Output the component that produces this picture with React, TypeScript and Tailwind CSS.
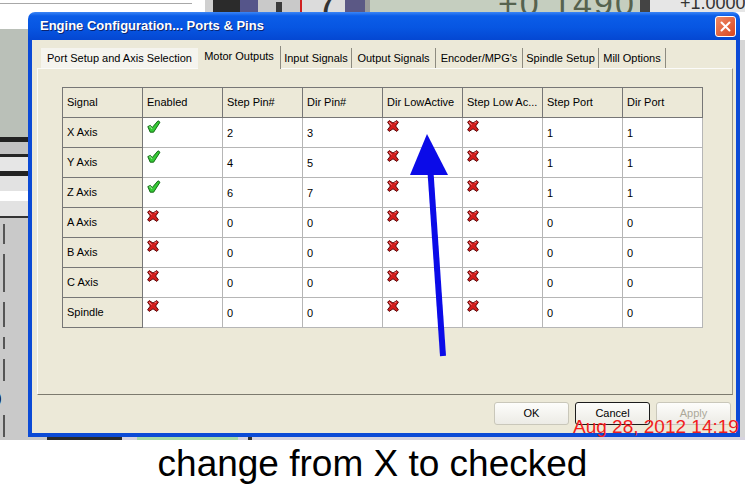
const font = "font-['Liberation_Sans',Arial,sans-serif]";

type Row = {
  signal: string;
  enabled: boolean;
  stepPin: number;
  dirPin: number;
  dirLow: boolean;
  stepLow: boolean;
  stepPort: number;
  dirPort: number;
};

const rows: Row[] = [
  { signal: 'X Axis', enabled: true, stepPin: 2, dirPin: 3, dirLow: false, stepLow: false, stepPort: 1, dirPort: 1 },
  { signal: 'Y Axis', enabled: true, stepPin: 4, dirPin: 5, dirLow: false, stepLow: false, stepPort: 1, dirPort: 1 },
  { signal: 'Z Axis', enabled: true, stepPin: 6, dirPin: 7, dirLow: false, stepLow: false, stepPort: 1, dirPort: 1 },
  { signal: 'A Axis', enabled: false, stepPin: 0, dirPin: 0, dirLow: false, stepLow: false, stepPort: 0, dirPort: 0 },
  { signal: 'B Axis', enabled: false, stepPin: 0, dirPin: 0, dirLow: false, stepLow: false, stepPort: 0, dirPort: 0 },
  { signal: 'C Axis', enabled: false, stepPin: 0, dirPin: 0, dirLow: false, stepLow: false, stepPort: 0, dirPort: 0 },
  { signal: 'Spindle', enabled: false, stepPin: 0, dirPin: 0, dirLow: false, stepLow: false, stepPort: 0, dirPort: 0 },
];

const headers = ['Signal', 'Enabled', 'Step Pin#', 'Dir Pin#', 'Dir LowActive', 'Step Low Ac...', 'Step Port', 'Dir Port'];

const tabs = [
  { label: 'Port Setup and Axis Selection', w: 'w-[157px]' },
  { label: 'Motor Outputs', w: 'w-[83px]' },
  { label: 'Input Signals', w: 'w-[71px]' },
  { label: 'Output Signals', w: 'w-[84px]' },
  { label: "Encoder/MPG's", w: 'w-[87px]' },
  { label: 'Spindle Setup', w: 'w-[76px]' },
  { label: 'Mill Options', w: 'w-[67px]' },
];

// green tick, Mach3 style: fat foot bottom-left, stick to the top-right
function CheckIcon() {
  return (
    <svg width="14" height="13" viewBox="0 0 14 13">
      <path
        d="M0.8 6.6 L3.4 5.4 L5.2 7.6 L11 0.8 L13 2.2 L6.6 12.2 L3.2 12.2 Z"
        fill="#35c935"
        stroke="#156b17"
        strokeWidth="1"
        strokeLinejoin="round"
      />
      <path d="M2.2 7 L3.4 6.6 L5 9" fill="none" stroke="#b0f4b0" strokeWidth="0.9" />
    </svg>
  );
}

function CrossIcon() {
  return (
    <svg width="12" height="12" viewBox="0 0 12 12">
      <path
        d="M0.6 2.2 L2.2 0.6 L6 3 L9.8 0.6 L11.4 2.2 L8.6 6 L11.4 9.8 L9.8 11.4 L6 8.8 L2.2 11.4 L0.6 9.8 L3.4 6 Z"
        fill="#d41d1d"
        stroke="#5c0909"
        strokeWidth="1"
        strokeLinejoin="round"
      />
      <path d="M2 2.3 L4.6 4.6 M7.6 2.6 L9.4 2" stroke="#ff9d9d" strokeWidth="0.9" />
    </svg>
  );
}

function IconCell({ on }: { on: boolean }) {
  return (
    <div className="h-[30px] border-r border-b border-[#b6b6b6] bg-white pl-[4px] pt-[2px]">
      {on ? <CheckIcon /> : <CrossIcon />}
    </div>
  );
}

function TextCell({ v }: { v: number }) {
  return (
    <div className="h-[30px] border-r border-b border-[#b6b6b6] bg-white pl-[4px] pt-[2px] flex items-center text-[11px] text-black">
      {v}
    </div>
  );
}

function Button({ label, strong, disabled }: { label: string; strong?: boolean; disabled?: boolean }) {
  return (
    <div
      className={`w-[75px] h-[23px] rounded-[3px] flex items-center justify-center text-[11px] bg-[linear-gradient(180deg,#fdfdfb,#ecebe5)] ${
        strong ? 'border border-[#1c1c1c]' : 'border border-[#c9c7ba]'
      } ${disabled ? 'text-[#aca899]' : 'text-black'}`}
    >
      {label}
    </div>
  );
}

function TopStrip() {
  return (
    <div className="h-[12px] flex overflow-hidden">
      <div className="w-[205px] bg-white pt-[3px]">
        <div className="w-[192px] h-px bg-[#a8a8a8]" />
      </div>
      <div className="w-[8px] bg-[#d0d0d0]" />
      <div className="w-[27px] bg-[#2b2b2b]" />
      <div className="w-[18px] bg-[#55558a]" />
      <div className="w-[42px] bg-[#c9c9c9] flex justify-center">
        <div className="w-[6px] bg-[#3a3a3a] mt-[2px]" />
      </div>
      <div className="w-[2px] bg-[#d02020]" />
      <div className="w-[43px] bg-[#dcdcdc] relative">
        <span className="absolute left-[18px] -top-[16px] text-[26px] font-bold text-[#333]">7</span>
      </div>
      <div className="w-[20px] bg-[#5b5885]" />
      <div className="w-[5px] bg-[#9a9a9a]" />
      <div className="w-[270px] bg-[#c5cebf] relative">
        <span className="absolute left-[128px] -top-[22px] text-[34px] tracking-[2px] text-[#56634f]">+0 1490</span>
      </div>
      <div className="w-[10px] bg-[#444]" />
      <div className="flex-1 bg-[#e6e6e6] relative">
        <span className="absolute left-[30px] -top-[10px] text-[18px] text-[#333]">+1.0000</span>
      </div>
    </div>
  );
}

function LeftStrip() {
  return (
    <div className="w-[28px] flex flex-col">
      <div className="h-[18px] bg-white" />
      <div className="h-[113px] bg-[#bac0b8]" />
      <div className="h-[5px] bg-[#222]" />
      <div className="h-[13px] bg-[#c2c2c2]" />
      <div className="h-[3px] bg-[#262626]" />
      <div className="h-[15px] bg-[#e6e6e6]" />
      <div className="h-[5px] bg-[#232323]" />
      <div className="h-[42px] bg-[#e2e2e2] flex flex-col justify-center">
        <div className="h-[10px] bg-white" />
      </div>
      <div className="h-[2px] bg-[#333]" />
      <div className="flex-1 bg-[#c9c9c9] pl-[3px] flex flex-col gap-[10px] pt-[6px]">
        <div className="w-[2px] h-[20px] bg-[#555]" />
        <div className="w-[2px] h-[38px] bg-[#555]" />
        <div className="w-[2px] h-[25px] bg-[#555]" />
        <div className="w-[2px] h-[12px] bg-[#555]" />
        <div className="w-[2px] h-[22px] bg-[#555]" />
        <div className="text-[14px] leading-none text-black -ml-[6px]">)</div>
        <div className="w-[2px] h-[22px] bg-[#555]" />
      </div>
    </div>
  );
}

function Dialog() {
  return (
    <div className="w-[712px] flex flex-col">
      <div className="h-[28px] rounded-t-[7px] bg-[linear-gradient(180deg,#3b86f6_0%,#0b5de8_14%,#0756e2_55%,#0447d2_100%)] flex items-center pl-[12px] pr-[4px]">
        <span className="flex-1 text-white font-bold text-[13px] [text-shadow:1px_1px_0_#0a2470]">
          Engine Configuration... Ports &amp; Pins
        </span>
        <div className="w-[21px] h-[21px] rounded-[3px] border border-white bg-[linear-gradient(135deg,#ef8a66,#d8461f)] flex items-center justify-center">
          <svg width="11" height="11" viewBox="0 0 11 11">
            <path d="M1.5 1.5 L9.5 9.5 M9.5 1.5 L1.5 9.5" stroke="white" strokeWidth="2" strokeLinecap="round" />
          </svg>
        </div>
      </div>
      <div className="flex-1 bg-[#ece9d8] border-x-4 border-b-4 border-[#0b4ad6] flex flex-col">
        <div className="flex pl-[9px] pt-[6px] h-[28px] items-end">
          {tabs.map((t, i) =>
            i === 1 ? (
              <div
                key={t.label}
                className={`${t.w} h-[23px] -mb-px z-10 bg-[#ece9d8] border-r border-[#8d8b80] flex items-center justify-center text-[11px] text-black pb-[3px]`}
              >
                {t.label}
              </div>
            ) : (
              <div
                key={t.label}
                className={`${t.w} h-[20px] flex items-center justify-center text-[11px] text-black ${
                  i === 0 ? 'bg-[#f5f4ee]' : 'border-r border-[#8d8b80]'
                }`}
              >
                {t.label}
              </div>
            )
          )}
        </div>
        <div className="ml-[5px] w-[696px] h-[327px] border border-l-[#fbfbf9] border-t-[#fbfbf9] border-r-[#9a988c] border-b-[#7c7a6e] pl-[24px] pt-[18px]">
          <div className="grid grid-cols-[repeat(8,80px)] w-[641px] border-l border-t border-[#767676] text-[11px] text-black">
            {headers.map((h) => (
              <div key={h} className="h-[30px] border-r border-b border-[#767676] bg-[#ece9d8] pl-[4px] flex items-center whitespace-nowrap">
                {h}
              </div>
            ))}
            {rows.map((r) => [
              <div key={r.signal} className="h-[30px] border-r border-b border-[#767676] bg-[#ece9d8] pl-[4px] flex items-center">
                {r.signal}
              </div>,
              <IconCell key={r.signal + 'e'} on={r.enabled} />,
              <TextCell key={r.signal + 's'} v={r.stepPin} />,
              <TextCell key={r.signal + 'd'} v={r.dirPin} />,
              <IconCell key={r.signal + 'dl'} on={r.dirLow} />,
              <IconCell key={r.signal + 'sl'} on={r.stepLow} />,
              <TextCell key={r.signal + 'sp'} v={r.stepPort} />,
              <TextCell key={r.signal + 'dp'} v={r.dirPort} />,
            ])}
          </div>
        </div>
        <div className="flex justify-end gap-[6px] pr-[5px] pt-[7px]">
          <Button label="OK" />
          <Button label="Cancel" strong />
          <Button label="Apply" disabled />
        </div>
      </div>
    </div>
  );
}

export default function App() {
  return (
    <div className={`relative w-[745px] h-[484px] overflow-hidden bg-white ${font}`}>
      <TopStrip />
      <div className="flex h-[425px]">
        <LeftStrip />
        <Dialog />
        <div className="flex-1 flex flex-col">
          <div className="h-[28px] bg-white" />
          <div className="flex-1 bg-[#d6d6d6]" />
        </div>
      </div>
      <div className="h-[3px] flex">
        <div className="w-[47px] bg-[#c9c9c9]" />
        <div className="w-[75px] bg-[#2a2a2a]" />
        <div className="w-[15px] bg-[#d6d3df]" />
        <div className="w-[101px] bg-[#a6d8a6]" />
        <div className="w-[10px] bg-[#d6d3df]" />
        <div className="w-[4px] bg-[#333]" />
        <div className="flex-1 bg-[#d6d3df]" />
      </div>
      <div className="pt-[5px] text-center text-[37px] leading-[37px] text-black">change from X to checked</div>

      {/* annotation overlay */}
      <svg className="absolute inset-0 pointer-events-none" width="745" height="484">
        <polygon points="427,134 410,175 448,175" fill="#0b0be8" />
        <line x1="430.5" y1="172" x2="443" y2="356" stroke="#0b0be8" strokeWidth="6" />
      </svg>
      <div className="absolute left-[573px] top-[417px] text-[19px] leading-none text-[#f21d1d] whitespace-nowrap">
        Aug 28, 2012 14:19
      </div>
    </div>
  );
}
